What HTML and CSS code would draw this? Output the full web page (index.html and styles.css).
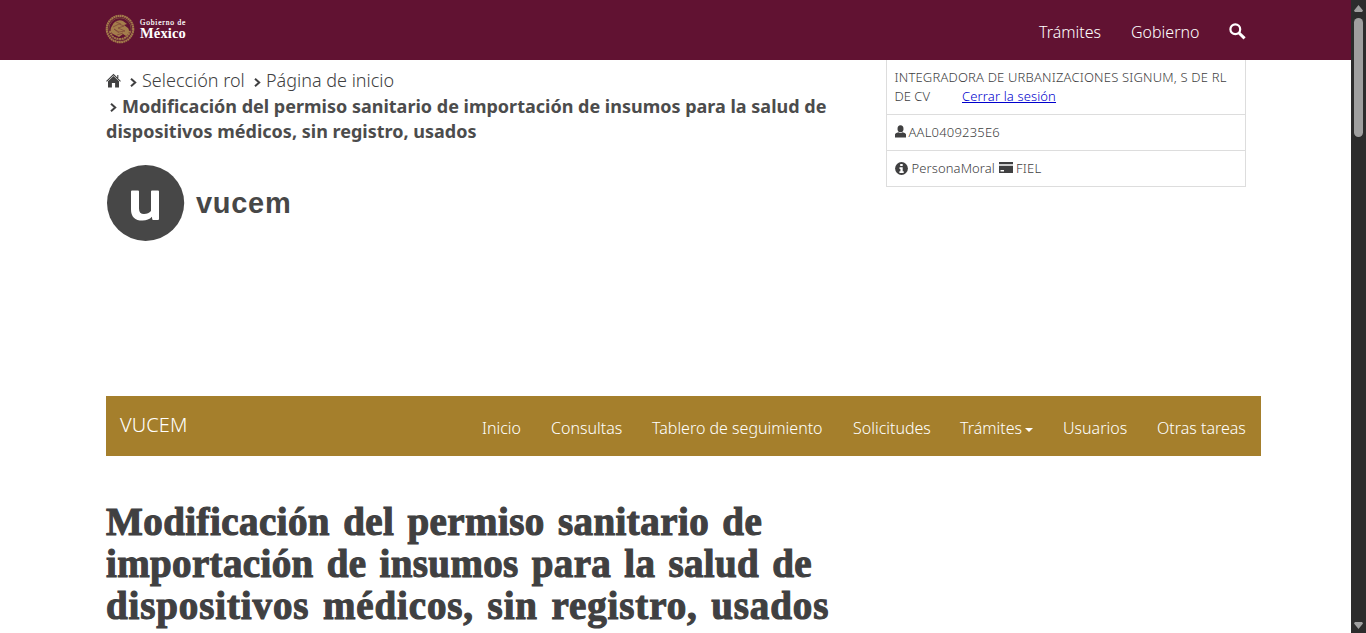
FILE: index.html
```html
<!DOCTYPE html>
<html lang="es">
<head>
<meta charset="utf-8">
<title>VUCEM</title>
<link rel="stylesheet" href="styles.css">
</head>
<body>
<div class="page">
  <header class="topbar">
    <div class="gob-logo">
      <svg class="seal" viewBox="0 0 30 30">
        <circle cx="15" cy="15" r="13.2" fill="none" stroke="#a47d4b" stroke-width="2.2" stroke-dasharray="1.8 .4"/>
        <circle cx="15" cy="15" r="11.2" fill="none" stroke="#7d4a3e" stroke-width="1"/>
        <path d="M7 12c2-5 7-7 11-5l4 3-3 1 4 3c2 3 1 6-2 8l-3-2-4 3-6-3c-3-2-3-5-1-8z" fill="#a47d4b"/>
        <path d="M8 13l6-3 5 2-6 2 7 3-6 1-5-3m2-7l5 2m-4 11l6-2m-9-4l5 4" fill="none" stroke="#7d4038" stroke-width=".7"/>
        <path d="M5 17c1 6 6 8 10 8s9-3 10-8" fill="none" stroke="#a47d4b" stroke-width="1.8" stroke-dasharray="2 .6"/>
      </svg>
      <div class="gob-name"><span class="gob-small">Gobierno de</span><span class="gob-big">México</span></div>
    </div>
    <nav class="top-nav">
      <a class="t1">Trámites</a><a class="t2">Gobierno</a>
      <svg class="search" viewBox="0 0 17 17"><circle cx="6.3" cy="6.3" r="4.9" fill="none" stroke="#fff" stroke-width="2.2"/><path d="M10 10l5.6 5.4" stroke="#fff" stroke-width="3"/></svg>
    </nav>
  </header>
  <main class="container">
    <section class="intro">
      <div class="left">
        <div class="crumbs">
          <div class="crumb-row">
            <svg class="home" viewBox="0 0 15 15"><path d="M7.5 3L13 8.2V14.500H9.100V10H5.900V14.500H2V8.200z" fill="#404041"/><path d="M.5 8.300L7.500 1.500 14.500 8.300M11.800 2v3" fill="none" stroke="#404041" stroke-width="1.1"/></svg>
            <svg class="chev c1" viewBox="0 0 7 9"><path d="M1 .8L5.2 4.5 1 8.2" /></svg>
            <a class="b1">Selección rol</a>
            <svg class="chev c2" viewBox="0 0 7 9"><path d="M1 .8L5.2 4.5 1 8.2" /></svg>
            <a class="b2">Página de inicio</a>
          </div>
          <div class="crumb-row current"><svg class="chev c3" viewBox="0 0 7 9"><path d="M1 .8L5.2 4.5 1 8.2" /></svg><span class="b3">Modificación del permiso sanitario de importación de insumos para la salud de</span></div>
          <div class="crumb-row current"><span class="b4">dispositivos médicos, sin registro, usados</span></div>
        </div>
        <div class="vucem-logo">
          <div class="disc"><svg viewBox="0 0 78 77"><ellipse cx="38.6" cy="38" rx="38.6" ry="38" fill="#474747"/><path d="M25 25.5h6q1 0 1 1V43.500q0 5.500 5 5.500 4.500 0 7-3V26.500q0-1 1-1h6q1 0 1 1V54q0 1-1 1h-4.800q-1 0-1-1l-.3-2.200Q41.500 55.600 35.500 55.600 24 55.600 24 44.500v-18q0-1 1-1z" fill="#fff"/></svg></div>
          <span class="wordmark">vucem</span>
        </div>
      </div>
      <aside class="session">
        <div class="cell first"><div class="s1">INTEGRADORA DE URBANIZACIONES SIGNUM, S DE RL</div><div class="s2"><span>DE CV</span><a class="logout">Cerrar la sesión</a></div></div>
        <div class="cell"><svg class="user" viewBox="0 0 11 13"><ellipse cx="5.5" cy="3.7" rx="3" ry="3.5"/><path d="M0 12.5V9.600Q0 8 3.400 7.200q2.100 1.400 4.200 0Q11 8 11 9.600v2.900z"/></svg><span class="s3">AAL0409235E6</span></div>
        <div class="cell"><svg class="info" viewBox="0 0 13 13"><circle cx="6.5" cy="6.5" r="6.4"/><path d="M5.200 2h2.500v2H5.200zM4.500 5.200h3.200v4.100h1V11H4.400V9.300h1V6.900h-.9z" fill="#fff"/></svg><span class="s4">PersonaMoral</span><svg class="card" viewBox="0 0 14 11"><path d="M0 0h14v2.300H0zM0 3.700h14V11H0z"/><path d="M1.500 8h3.500v1.500H1.500z" fill="#fff"/></svg><span class="s5">FIEL</span></div>
      </aside>
    </section>
    <nav class="menu">
      <a class="brand">VUCEM</a>
      <div class="links">
        <a class="m1">Inicio</a><a class="m2">Consultas</a><a class="m3">Tablero de seguimiento</a><a class="m4">Solicitudes</a><a class="m5">Trámites</a><i class="caret"></i><a class="m6">Usuarios</a><a class="m7">Otras tareas</a>
      </div>
    </nav>
    <h1 class="title"><span class="h1a">Modificación del permiso sanitario de</span><span class="h1b">importación de insumos para la salud de</span><span class="h1c">dispositivos médicos, sin registro, usados</span></h1>
  </main>
</div>
<div class="scrollbar"><i class="up"></i><i class="thumb"></i><i class="down"></i></div>
</body>
</html>
```
FILE: styles.css
```css
* { box-sizing: border-box; }
body { margin: 0; width: 1366px; height: 633px; overflow: hidden; display: flex; background: #fff; font-family: "Noto Sans", sans-serif; font-weight: 300; color: #404041; }
.page { width: 1351px; height: 633px; overflow: hidden; }
a, span, .s1 { white-space: nowrap; }
svg { display: block; flex: none; }
.topbar { height: 60px; background: #611232; padding: 0 105px 0 105px; display: flex; justify-content: space-between; }
.gob-logo { display: flex; padding-top: 14px; }
.seal { width: 30px; height: 30px; }
.gob-name { display: flex; flex-direction: column; margin-left: 5px; padding-top: 5px; color: #fff; font-family: "Liberation Serif", serif; font-weight: 700; }
.gob-small { font-size: 7.5px; line-height: 8px; letter-spacing: .8px; font-weight: 400; -webkit-text-stroke: .2px #fff; }
.gob-big { font-size: 14.5px; line-height: 12px; letter-spacing: .15px; }
.top-nav { display: flex; color: #fff; font-size: 16px; line-height: 24px; padding-top: 20px; }
.t1 { width: 92px; }
.t2 { width: 98px; }
.search { width: 17px; height: 17px; margin-top: 3px; }
.container { padding-left: 106px; }
.intro { display: flex; height: 336px; }
.left { width: 780px; }
.crumbs { padding-top: 8px; font-size: 18px; }
.crumb-row { display: flex; align-items: center; height: 25.5px; line-height: 25px; }
.current { font-weight: 700; color: #4c4c4c; }
.home { width: 15px; height: 15px; }
.chev { width: 7px; height: 9px; margin-top: 3px; }
.chev path { fill: none; stroke: #404041; stroke-width: 2; }
.c1 { margin-left: 9px; margin-right: 5px; }
.b1 { width: 112px; }
.c2 { margin-right: 5px; }
.c3 { margin-left: 4px; margin-right: 5px; }
.vucem-logo { display: flex; margin-top: 20px; }
.disc { width: 78px; height: 77px; margin-left: 1px; }
.wordmark { font-family: "Liberation Sans", sans-serif; font-weight: 700; font-size: 29px; line-height: 34px; letter-spacing: .7px; color: #474747; margin: 21px 0 0 11px; }
.session { width: 360px; height: 127px; border: 1px solid #ddd; border-top: 0; font-size: 13px; }
.cell { height: 36px; border-bottom: 1px solid #ddd; padding: 0 7.5px 2px; display: flex; align-items: center; }
.cell:last-child { border-bottom: 0; }
.cell svg { fill: #404041; }
.first { height: 55px; display: block; padding-top: 8px; line-height: 19px; }
.s1 { letter-spacing: .18px; }
.s2 { display: flex; }
.s2 span { width: 67.5px; }
.logout { color: #0000cd; text-decoration: underline; letter-spacing: .13px; }
.user { width: 11px; height: 13px; margin-right: 3px; }
.s3 { letter-spacing: .2px; }
.info { width: 13px; height: 13px; margin-right: 4px; }
.s4 { width: 87.5px; letter-spacing: .1px; }
.card { width: 14px; height: 11px; margin-right: 3px; margin-top: -1px; }
.s5 { letter-spacing: .2px; }
.menu { width: 1155px; height: 60px; background: #a57f2c; color: #fff; display: flex; justify-content: space-between; }
.brand { font-size: 20px; line-height: 28px; padding: 15px 0 0 14px; letter-spacing: .1px; }
.links { display: flex; font-size: 16px; line-height: 24px; padding-top: 20px; }
.m1 { width: 69px; }
.m2 { width: 101px; }
.m3 { width: 201px; }
.m4 { width: 107px; }
.m5 { width: 65px; }
.m6 { width: 94px; }
.m7 { width: 104px; }
.caret { width: 8px; height: 4px; margin: 12px 30px 0 0; background: #fff; clip-path: polygon(0 0, 100% 0, 50% 100%); }
.title { margin: 45px 0 0; font-family: "Liberation Serif", serif; font-weight: 700; font-size: 39px; line-height: 42px; word-spacing: 3px; color: #404041; -webkit-text-stroke: 1.1px #404041; }
.title span { display: block; }
.h1a { letter-spacing: .43px; }
.h1b { letter-spacing: .36px; }
.h1c { letter-spacing: .87px; }
.scrollbar { width: 15px; height: 633px; background: #2c2c2c; display: flex; flex-direction: column; align-items: center; }
.scrollbar i { background: #9f9f9f; }
.up { width: 9px; height: 7px; margin-top: 5px; clip-path: polygon(50% 0, 100% 80%, 90% 100%, 10% 100%, 0 80%); }
.thumb { width: 9px; height: 119px; margin-top: 6px; border-radius: 5px; }
.down { width: 9px; height: 7px; margin-top: auto; margin-bottom: 4px; clip-path: polygon(0 20%, 10% 0, 90% 0, 100% 20%, 50% 100%); }
```
